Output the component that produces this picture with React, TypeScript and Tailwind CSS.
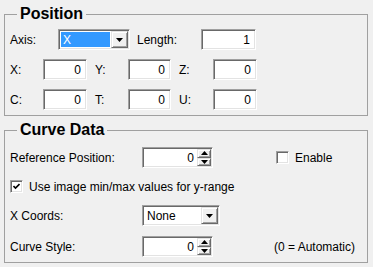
import React from 'react';

const sunken =
  'border border-t-[#a0a0a0] border-l-[#a0a0a0] border-b-white border-r-white shadow-[inset_1px_1px_0_#696969,inset_-1px_-1px_0_#e3e3e3] bg-white';
const raised =
  'bg-[#f0f0f0] border border-t-[#e3e3e3] border-l-[#e3e3e3] border-b-[#696969] border-r-[#696969] shadow-[inset_1px_1px_0_#ffffff,inset_-1px_-1px_0_#a0a0a0]';

const Arrow: React.FC<{ up?: boolean; w?: number }> = ({ up, w = 7 }) => (
  <svg width={w} height={Math.ceil(w / 2)} viewBox={`0 0 ${w} ${Math.ceil(w / 2)}`}>
    {up ? (
      <polygon points={`0,${Math.ceil(w / 2)} ${w},${Math.ceil(w / 2)} ${w / 2},0`} fill="#000" />
    ) : (
      <polygon points={`0,0 ${w},0 ${w / 2},${Math.ceil(w / 2)}`} fill="#000" />
    )}
  </svg>
);

const NumField: React.FC<{ value: string; w: string }> = ({ value, w }) => (
  <div className={`${sunken} ${w} h-[21px] flex items-center justify-end pr-[5px]`}>{value}</div>
);

const Combo: React.FC<{ value: string; w: string; selected?: boolean }> = ({ value, w, selected }) => (
  <div className={`${sunken} ${w} h-[21px] flex p-[1px]`}>
    <div className="flex-1 p-[1px] flex">
      <div className={`flex-1 flex items-center pl-[2px] ${selected ? 'bg-[#3399ff] text-white' : ''}`}>{value}</div>
    </div>
    <div className={`${raised} w-[17px] flex items-center justify-center`}>
      <Arrow />
    </div>
  </div>
);

const Spin: React.FC<{ value: string }> = ({ value }) => (
  <div className={`${sunken} w-[71px] h-[21px] flex p-[1px]`}>
    <div className="flex-1 flex items-center justify-end pr-[3px]">{value}</div>
    <div className="w-[14px] flex flex-col">
      <div className={`${raised} flex-1 flex items-center justify-center`}>
        <Arrow up w={7} />
      </div>
      <div className={`${raised} flex-1 flex items-center justify-center`}>
        <Arrow w={7} />
      </div>
    </div>
  </div>
);

const CheckBox: React.FC<{ checked?: boolean }> = ({ checked }) => (
  <div className={`${sunken} w-[13px] h-[13px] flex items-center justify-center`}>
    {checked && (
      <svg width="7" height="7" viewBox="0 0 7 7">
        <polyline points="0.5,3 2.5,5 6.5,1" fill="none" stroke="#000" strokeWidth="1.6" />
      </svg>
    )}
  </div>
);

const Label: React.FC<{ w: string; children: React.ReactNode; className?: string }> = ({ w, children, className = '' }) => (
  <div className={`${w} ${className} shrink-0`}>{children}</div>
);

export default function App() {
  return (
    <div className="w-[373px] h-[267px] bg-[#f0f0f0] pl-[4px] pr-[5px] pt-[5px] text-[12px] text-black font-['Liberation_Sans',Arial,sans-serif] overflow-hidden">
      {/* Position */}
      <fieldset className="border border-[#a0a0a0] pl-[5px] pt-[6px] pb-[5px]">
        <legend className="ml-[7px] px-[3px] text-[16px] leading-[18px] font-bold">Position</legend>
        <div className="flex items-center h-[21px]">
          <Label w="w-[48px]">Axis:</Label>
          <Combo value="X" w="w-[72px]" selected />
          <Label w="w-[64px]" className="ml-[7px]">Length:</Label>
          <NumField value="1" w="w-[55px]" />
        </div>
        <div className="flex items-center h-[21px] mt-[9px]">
          <Label w="w-[33px]">X:</Label>
          <NumField value="0" w="w-[44px]" />
          <Label w="w-[33px]" className="ml-[8px]">Y:</Label>
          <NumField value="0" w="w-[43px]" />
          <Label w="w-[34px]" className="ml-[8px]">Z:</Label>
          <NumField value="0" w="w-[44px]" />
        </div>
        <div className="flex items-center h-[21px] mt-[9px]">
          <Label w="w-[33px]">C:</Label>
          <NumField value="0" w="w-[44px]" />
          <Label w="w-[33px]" className="ml-[8px]">T:</Label>
          <NumField value="0" w="w-[43px]" />
          <Label w="w-[34px]" className="ml-[8px]">U:</Label>
          <NumField value="0" w="w-[44px]" />
        </div>
      </fieldset>

      {/* Curve Data */}
      <fieldset className="border border-[#a0a0a0] mt-[5px] pl-[5px] pt-[8px] pb-[5px]">
        <legend className="ml-[7px] px-[3px] text-[16px] leading-[18px] font-bold">Curve Data</legend>
        <div className="flex items-center h-[21px]">
          <Label w="w-[132px]">Reference Position:</Label>
          <Spin value="0" />
          <div className="ml-[63px] flex items-center gap-[6px]">
            <CheckBox />
            <span>Enable</span>
          </div>
        </div>
        <div className="flex items-center h-[21px] mt-[8px] gap-[6px]">
          <CheckBox checked />
          <span>Use image min/max values for y-range</span>
        </div>
        <div className="flex items-center h-[21px] mt-[8px]">
          <Label w="w-[132px]">X Coords:</Label>
          <Combo value="None" w="w-[78px]" />
        </div>
        <div className="flex items-center h-[21px] mt-[10px]">
          <Label w="w-[132px]">Curve Style:</Label>
          <Spin value="0" />
          <span className="ml-[61px]">(0 = Automatic)</span>
        </div>
      </fieldset>
    </div>
  );
}
